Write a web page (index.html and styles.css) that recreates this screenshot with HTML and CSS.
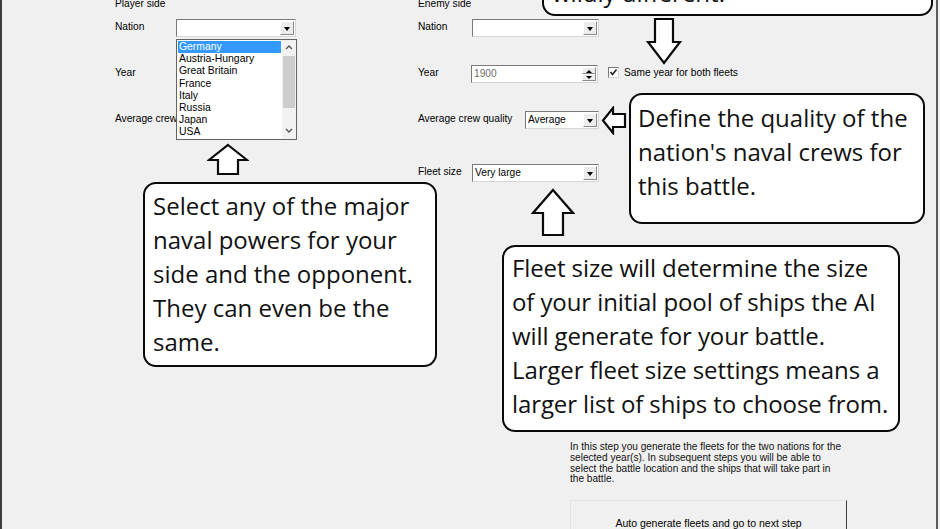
FILE: index.html
```html
<!DOCTYPE html>
<html lang="en">
<head>
    <meta charset="UTF-8">
    <meta name="viewport" content="width=device-width, initial-scale=1.0">
    <title>Generate fleets</title>
    <link rel="stylesheet" href="styles.css">
</head>
<body>
    <div class="window">
        <div class="form">
            <section class="side side-player">
                <div class="side-title">Player side</div>
                <div class="row row-nation">
                    <span class="label">Nation</span>
                    <div class="combo combo-open">
                        <span class="value"></span>
                        <span class="drop"></span>
                        <ul class="droplist">
                            <li class="selected">Germany</li>
                            <li>Austria-Hungary</li>
                            <li>Great Britain</li>
                            <li>France</li>
                            <li>Italy</li>
                            <li>Russia</li>
                            <li>Japan</li>
                            <li>USA</li>
                            <li class="scrollbar">
                                <svg class="chev" viewBox="0 0 8 5" width="8" height="5"><path d="M1 4 L4 1 L7 4"/></svg>
                                <span class="thumb"></span>
                                <svg class="chev" viewBox="0 0 8 5" width="8" height="5"><path d="M1 1 L4 4 L7 1"/></svg>
                            </li>
                        </ul>
                    </div>
                </div>
                <div class="row row-year">
                    <span class="label">Year</span>
                </div>
                <div class="row row-crew">
                    <span class="label">Average crew quality</span>
                </div>
            </section>

            <section class="side side-enemy">
                <div class="side-title">Enemy side</div>
                <div class="row row-nation">
                    <span class="label">Nation</span>
                    <div class="combo combo-wide">
                        <span class="value"></span>
                        <span class="drop"></span>
                    </div>
                </div>
                <div class="row row-year">
                    <span class="label">Year</span>
                    <div class="combo combo-year">
                        <span class="value value-disabled">1900</span>
                        <span class="spin"><i class="up"></i><i class="down"></i></span>
                    </div>
                    <label class="check">
                        <span class="box">
                            <svg viewBox="0 0 9 9" width="9" height="9"><path d="M1.5 4 L3.5 6.5 L7.5 1.5"/></svg>
                        </span>
                        Same year for both fleets
                    </label>
                </div>
                <div class="row row-crew">
                    <span class="label">Average crew quality</span>
                    <div class="combo combo-small">
                        <span class="value">Average</span>
                        <span class="drop"></span>
                    </div>
                </div>
                <div class="row row-fleet">
                    <span class="label">Fleet size</span>
                    <div class="combo combo-wide">
                        <span class="value">Very large</span>
                        <span class="drop"></span>
                    </div>
                </div>
            </section>
        </div>

        <div class="footer">
            <p class="hint">In this step you generate the fleets for the two nations for the<br>selected year(s). In subsequent steps you will be able to<br>select the battle location and the ships that will take part in<br>the battle.</p>
            <button class="next">Auto generate fleets and go to next step</button>
        </div>

        <!-- annotations drawn over the dialog -->
        <div class="callout callout-top">wildly different.</div>
        <div class="callout callout-crew">Define the quality of the<br>nation's naval crews for<br>this battle.</div>
        <div class="callout callout-nation">Select any of the major<br>naval powers for your<br>side and the opponent.<br>They can even be the<br>same.</div>
        <div class="callout callout-fleet">Fleet size will determine the size<br>of your initial pool of ships the AI<br>will generate for your battle.<br>Larger fleet size settings means a<br>larger list of ships to choose from.</div>

        <svg class="arrow arrow-year" width="36" height="48" viewBox="0 0 36 48"><polygon points="9,2 27,2 27,25 34,25 18,46 2,25 9,25"/></svg>
        <svg class="arrow arrow-crew" width="26" height="29" viewBox="0 0 26 29"><polygon points="2,14.5 12,2 12,8 24,8 24,21 12,21 12,27"/></svg>
        <svg class="arrow arrow-nation" width="42" height="33" viewBox="0 0 42 33"><polygon points="21,2 40,17 31,17 31,31 11,31 11,17 2,17"/></svg>
        <svg class="arrow arrow-fleet" width="44" height="49" viewBox="0 0 44 49"><polygon points="22,2 42,25 32,25 32,47 12,47 12,25 2,25"/></svg>
    </div>
</body>
</html>
```

FILE: styles.css
```css
* {
    margin: 0;
    padding: 0;
    box-sizing: border-box;
}

body {
    background: #f0f0f0;
    font-family: 'Liberation Sans', Arial, sans-serif;
    font-size: 10.2px;
    color: #000;
}

.window {
    position: relative;
    width: 940px;
    height: 529px;
    overflow: hidden;
    border-left: 2px solid #3a3d3d;
}

.window::after {
    content: '';
    position: absolute;
    top: 0;
    bottom: 0;
    left: 934px;
    width: 2px;
    background: #5a5a5a;
}

.form {
    display: flex;
    height: 442px;
    padding-left: 113px;
}

.side {
    display: flex;
    flex-direction: column;
}

.side-player {
    width: 303px;
}

.side-title {
    height: 18px;
    line-height: 18px;
    margin-top: -5px;
}

.row {
    display: flex;
    align-items: flex-start;
    height: 18px;
}

.row-nation { margin-top: 6px; }
.row-year { margin-top: 28px; }
.row-crew { margin-top: 28px; }
.row-fleet { margin-top: 35px; }

.label {
    width: 54px;
    line-height: 15px;
    white-space: nowrap;
}

/* the open list hides the rest of these labels */
.side-player .label {
    width: 61px;
    overflow: hidden;
}

.side-enemy .row-crew .label {
    width: 107px;
}

/* combo boxes */
.combo {
    position: relative;
    display: flex;
    height: 18px;
    width: 120px;
    background: #fff;
    border: 1px solid;
    border-color: #7a7a7a #d6d6d6 #d6d6d6 #7a7a7a;
}

.combo-wide { width: 127px; }
.combo-year { width: 127px; margin-left: -1px; }
.combo-small { width: 74px; }

.value {
    flex: 1;
    padding-left: 2px;
    line-height: 16px;
    white-space: nowrap;
    overflow: hidden;
}

.value-disabled {
    color: #6d6d6d;
}

.drop {
    position: relative;
    width: 14px;
    margin: 1px 1px 1px 0;
    background: #ececec;
    border: 1px solid;
    border-color: #fff #8a8a8a #8a8a8a #fff;
}

.drop::after {
    content: '';
    position: absolute;
    left: 3px;
    top: 5px;
    border-left: 3px solid transparent;
    border-right: 3px solid transparent;
    border-top: 4px solid #000;
}

.spin {
    display: flex;
    flex-direction: column;
    width: 14px;
    margin: 1px 1px 1px 0;
}

.spin i {
    position: relative;
    flex: 1;
    background: #ececec;
    border: 1px solid;
    border-color: #fff #8a8a8a #8a8a8a #fff;
}

.spin i::after {
    content: '';
    position: absolute;
    left: 3px;
    top: 2px;
    border-left: 3px solid transparent;
    border-right: 3px solid transparent;
}

.spin .up::after { border-bottom: 3px solid #000; }
.spin .down::after { border-top: 3px solid #000; top: 1px; }

/* open list under the player nation */
.droplist {
    position: absolute;
    left: -1px;
    top: 19px;
    width: 121px;
    height: 101px;
    list-style: none;
    background: #fff;
    border: 1px solid #646464;
    padding: 1px 15px 0 1px;
    font-size: 10.4px;
}

.droplist li {
    height: 12.2px;
    line-height: 12.2px;
    padding-left: 1px;
    white-space: nowrap;
}

.droplist .selected {
    background: #3399ff;
    color: #fff;
}

.droplist .scrollbar {
    position: absolute;
    top: 0;
    right: 0;
    bottom: 0;
    width: 14px;
    height: auto;
    padding: 5px 0 4px;
    background: #f2f2f2;
    display: flex;
    flex-direction: column;
    align-items: center;
}

.scrollbar .thumb {
    width: 12px;
    height: 52px;
    margin: 6px 0 20px;
    background: #cdcdcd;
}

.chev {
    fill: none;
    stroke: #555;
    stroke-width: 1.4;
}

/* checkbox */
.check {
    display: flex;
    align-items: center;
    gap: 5px;
    margin-left: 10px;
    margin-top: 2px;
    white-space: nowrap;
}

.check .box {
    display: flex;
    align-items: center;
    justify-content: center;
    width: 11px;
    height: 11px;
    background: #fff;
    border: 1px solid;
    border-color: #7a7a7a #d6d6d6 #d6d6d6 #7a7a7a;
}

.check svg {
    fill: none;
    stroke: #222;
    stroke-width: 1.6;
}

/* bottom area */
.footer {
    margin-left: 568px;
    width: 280px;
}

.hint {
    font-size: 10.1px;
    line-height: 10.8px;
    color: #111;
    white-space: nowrap;
}

.next {
    display: block;
    width: 277px;
    height: 46px;
    margin-top: 15px;
    font-family: inherit;
    font-size: 10.5px;
    background: #f0f0f0;
    border: 1px solid;
    border-color: #e3e3e3 #3c3c3c #3c3c3c #e3e3e3;
    padding-top: 0;
}

/* annotation balloons */
.callout {
    position: absolute;
    background: #fff;
    border: 2px solid #0a0a0a;
    border-radius: 13px;
    padding: 5px 4px 5px 8px;
    font-family: 'Open Sans', sans-serif;
    font-size: 24px;
    line-height: 34px;
    color: #111;
    white-space: nowrap;
}

.callout-top {
    left: 540px;
    top: -31px;
    width: 391px;
    height: 47px;
}

.callout-crew {
    left: 627px;
    top: 93px;
    width: 296px;
    height: 131px;
    padding-top: 6px;
    padding-left: 7px;
}

.callout-nation {
    left: 141px;
    top: 182px;
    width: 294px;
    height: 185px;
}

.callout-fleet {
    left: 500px;
    top: 245px;
    width: 398px;
    height: 187px;
    padding-top: 4px;
    letter-spacing: -0.1px;
}

.arrow {
    position: absolute;
    fill: #fff;
    stroke: #0a0a0a;
    stroke-width: 2.2;
    stroke-linejoin: miter;
}

.arrow-year { left: 644px; top: 17px; }
.arrow-crew { left: 599px; top: 106px; }
.arrow-nation { left: 205px; top: 143px; }
.arrow-fleet { left: 529px; top: 188px; }
```
